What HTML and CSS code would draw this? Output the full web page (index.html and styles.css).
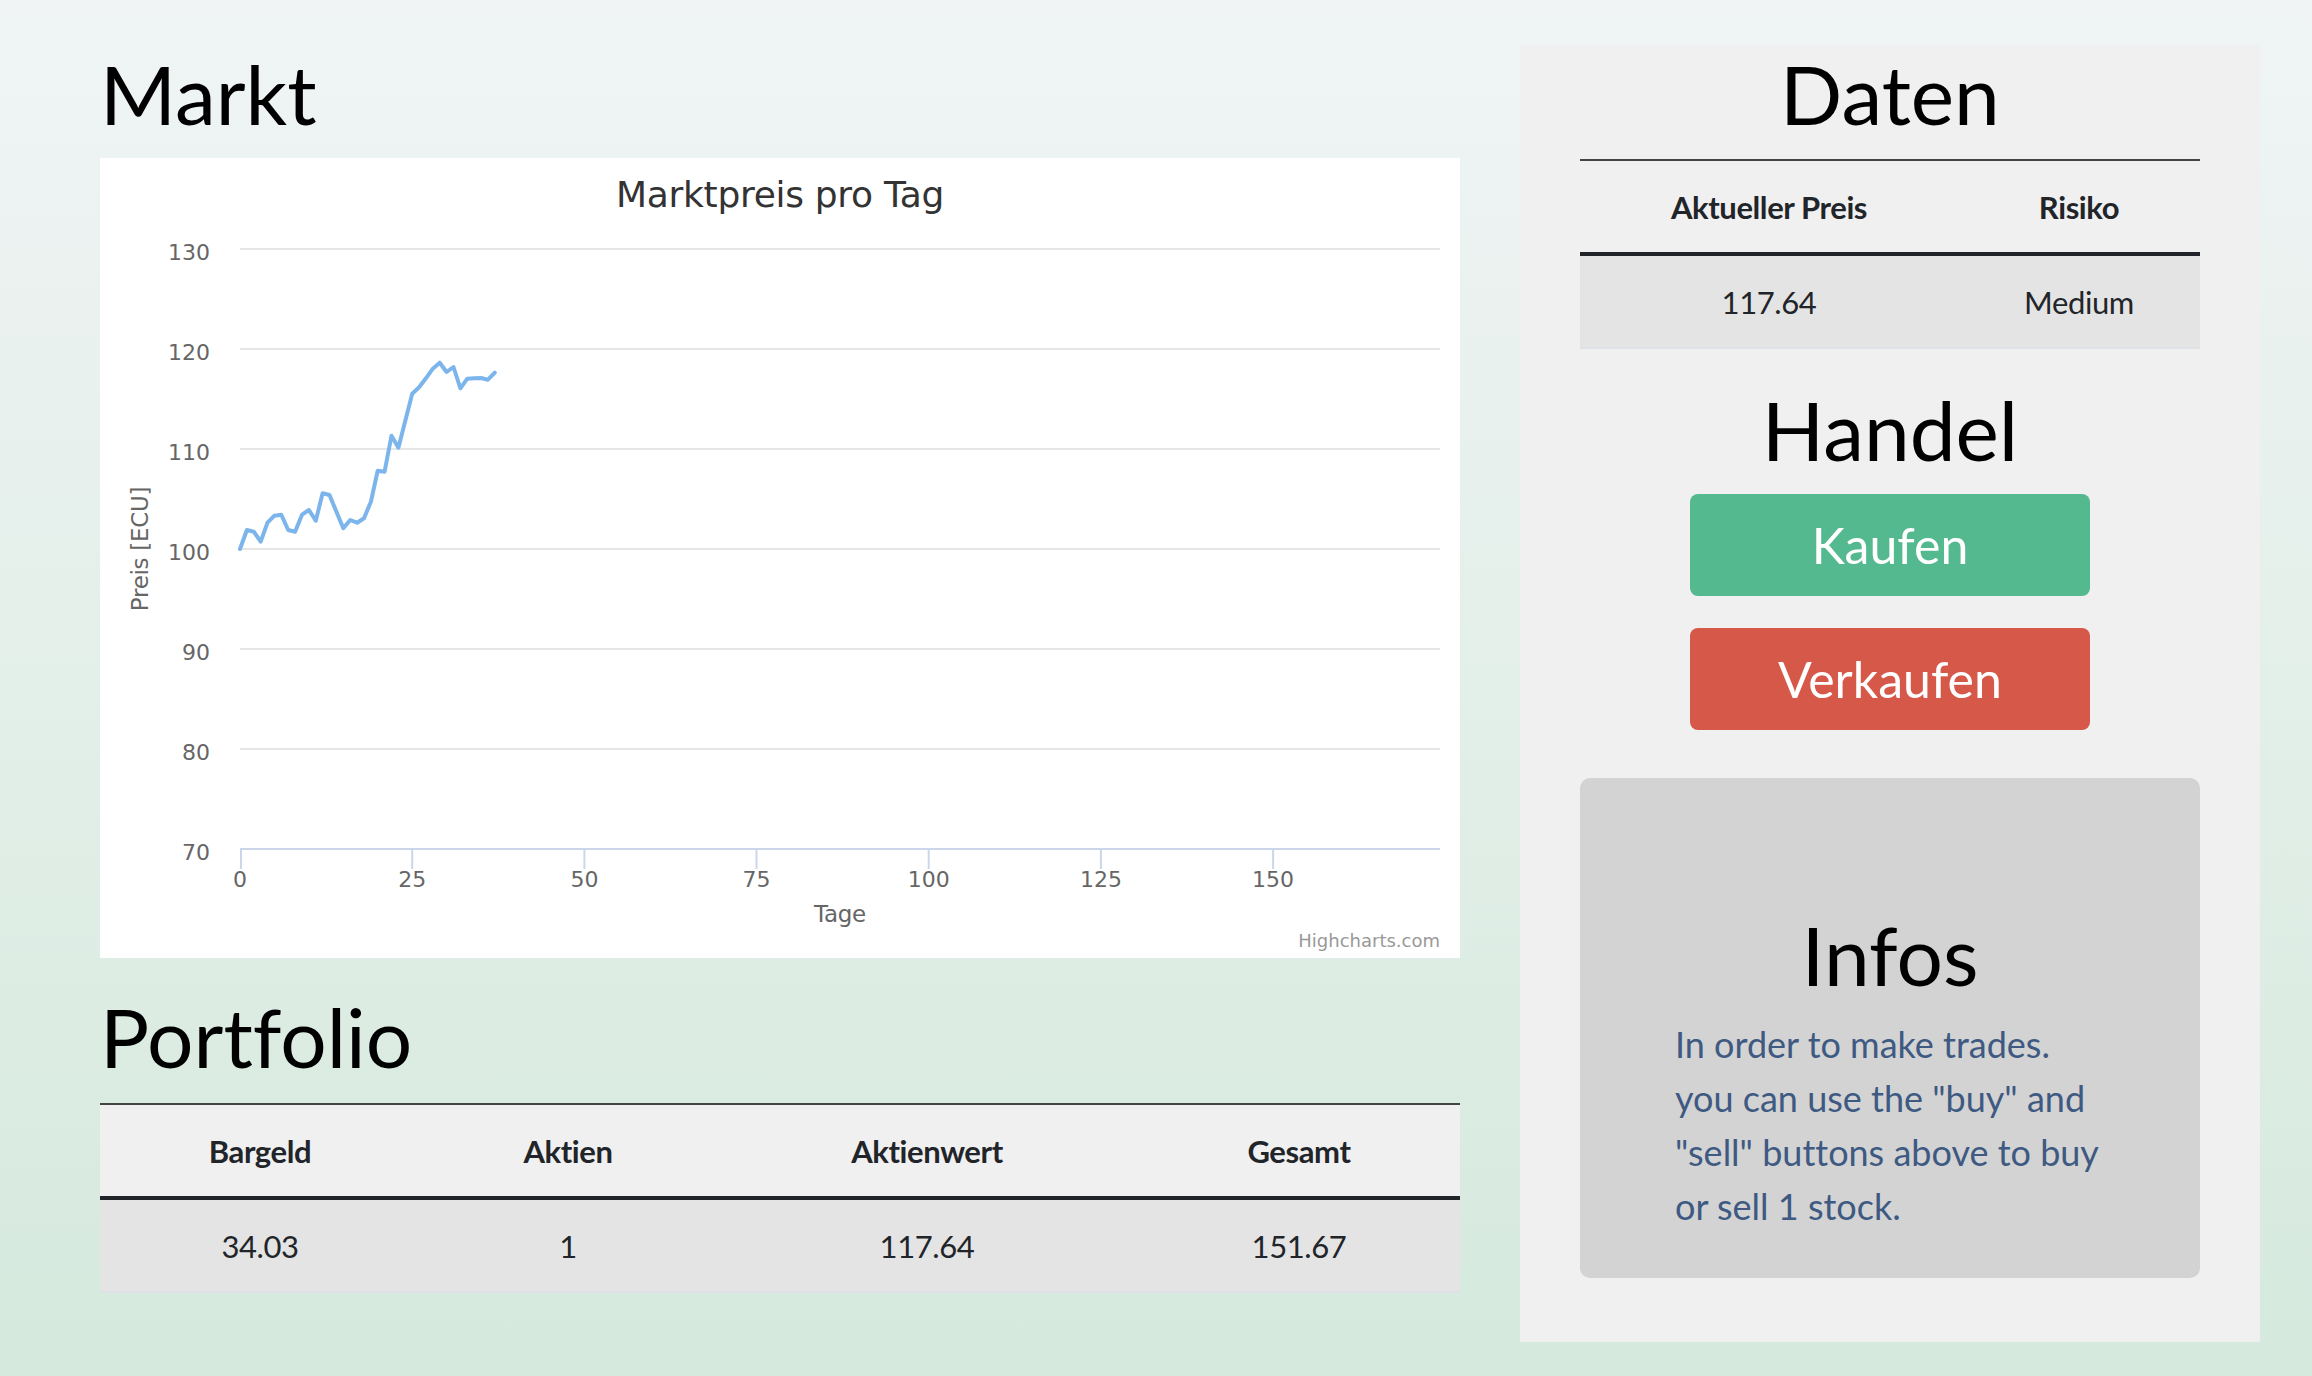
FILE: index.html
```html
<!DOCTYPE html>
<html lang="de">
<head>
<meta charset="utf-8">
<title>Markt</title>
<link rel="stylesheet" href="styles.css">
</head>
<body>
<div class="page">
  <main class="left">
    <h1 class="heading markt">Markt</h1>
    <div class="chart">
      <svg class="chart-svg" width="1360" height="800" viewBox="0 0 1360 800" xmlns="http://www.w3.org/2000/svg">
        <rect x="0" y="0" width="1360" height="800" fill="#ffffff"/>
        <g stroke="#e6e6e6" stroke-width="2">
          <line x1="140" y1="91" x2="1340" y2="91"/>
          <line x1="140" y1="191" x2="1340" y2="191"/>
          <line x1="140" y1="291" x2="1340" y2="291"/>
          <line x1="140" y1="391" x2="1340" y2="391"/>
          <line x1="140" y1="491" x2="1340" y2="491"/>
          <line x1="140" y1="591" x2="1340" y2="591"/>
        </g>
        <g stroke="#ccd6eb" stroke-width="2">
          <line x1="140" y1="691" x2="1340" y2="691"/>
          <line x1="141" y1="691" x2="141" y2="711"/>
          <line x1="312.2" y1="691" x2="312.2" y2="711"/>
          <line x1="484.4" y1="691" x2="484.4" y2="711"/>
          <line x1="656.5" y1="691" x2="656.5" y2="711"/>
          <line x1="828.7" y1="691" x2="828.7" y2="711"/>
          <line x1="1000.9" y1="691" x2="1000.9" y2="711"/>
          <line x1="1173.1" y1="691" x2="1173.1" y2="711"/>
        </g>
        <text class="c-title" x="680" y="49" text-anchor="middle">Marktpreis pro Tag</text>
        <g class="c-label" text-anchor="end">
          <text x="110" y="102">130</text>
          <text x="110" y="202">120</text>
          <text x="110" y="302">110</text>
          <text x="110" y="402">100</text>
          <text x="110" y="502">90</text>
          <text x="110" y="602">80</text>
          <text x="110" y="702">70</text>
        </g>
        <g class="c-label" text-anchor="middle">
          <text x="140" y="729">0</text>
          <text x="312.2" y="729">25</text>
          <text x="484.4" y="729">50</text>
          <text x="656.5" y="729">75</text>
          <text x="828.7" y="729">100</text>
          <text x="1000.9" y="729">125</text>
          <text x="1173.1" y="729">150</text>
        </g>
        <text class="c-axis" x="740" y="764" text-anchor="middle">Tage</text>
        <text class="c-axis" transform="translate(48,391) rotate(-90)" text-anchor="middle">Preis [ECU]</text>
        <text class="c-credits" x="1340" y="789" text-anchor="end">Highcharts.com</text>
        <polyline fill="none" stroke="#7cb5ec" stroke-width="4" stroke-linejoin="round" stroke-linecap="round"
          points="140,391 146.9,372 153.8,373.7 160.7,383.7 167.5,364.7 174.4,357.7 181.3,356.7 188.2,372 195.1,373.7 202,356.7 208.9,352 215.8,362.7 222.6,335.3 229.5,337 236.4,353.7 243.3,370.3 250.2,362 257.1,364.7 264,360.3 270.9,343.7 277.7,312.7 284.6,313.7 291.5,277.7 298.4,289.7 305.3,262.7 312.2,235.7 319.1,229.3 325.9,220.3 332.8,210.7 339.7,204.7 346.6,214 353.5,209 360.4,230.3 367.3,220.7 374.2,220.3 381,220 387.9,221.7 394.8,214.6"/>
      </svg>
    </div>
    <h1 class="heading portfolio-title">Portfolio</h1>
    <table class="tbl portfolio">
      <thead>
        <tr>
          <th class="pc1">Bargeld</th>
          <th class="pc2">Aktien</th>
          <th class="pc3">Aktienwert</th>
          <th class="pc4">Gesamt</th>
        </tr>
      </thead>
      <tbody>
        <tr>
          <td>34.03</td>
          <td>1</td>
          <td>117.64</td>
          <td>151.67</td>
        </tr>
      </tbody>
    </table>
  </main>
  <aside class="panel">
    <h1 class="heading daten">Daten</h1>
    <table class="tbl daten-table">
      <thead>
        <tr>
          <th class="dc1">Aktueller Preis</th>
          <th class="dc2">Risiko</th>
        </tr>
      </thead>
      <tbody>
        <tr>
          <td>117.64</td>
          <td>Medium</td>
        </tr>
      </tbody>
    </table>
    <h1 class="heading handel">Handel</h1>
    <div class="trade">
      <button class="btn buy" type="button">Kaufen</button>
      <button class="btn sell" type="button">Verkaufen</button>
    </div>
    <section class="infos">
      <h1 class="heading infos-title">Infos</h1>
      <p class="infos-text">In order to make trades. you can use the "buy" and "sell" buttons above to buy or sell 1 stock.</p>
    </section>
  </aside>
</div>
</body>
</html>
```

FILE: styles.css
```css
html, body {
  margin: 0;
  padding: 0;
}

body {
  min-height: 1376px;
  font-family: Lato, "Open Sans", "Liberation Sans", sans-serif;
  font-variant-ligatures: none;
  background: linear-gradient(to bottom, #f0f4f5 0%, #e3efe9 50%, #d5e9dd 100%);
  color: #212529;
}

.page {
  display: flex;
  align-items: flex-start;
  gap: 60px;
  padding: 45px 52px 0 100px;
}

.left {
  width: 1360px;
  flex: none;
}

.heading {
  margin: 0;
  font-size: 82px;
  line-height: 96px;
  font-weight: 400;
  color: #000;
}

.markt {
  margin-bottom: 17px;
}

.chart {
  width: 1360px;
  height: 800px;
  background: #fff;
}

.chart-svg {
  display: block;
}

.c-title {
  font-family: "Lucida Grande", "DejaVu Sans", sans-serif;
  font-size: 36px;
  letter-spacing: -0.3px;
  fill: #333333;
}

.c-label {
  font-family: "Lucida Grande", "DejaVu Sans", sans-serif;
  font-size: 22px;
  fill: #666666;
}

.c-axis {
  font-family: "Lucida Grande", "DejaVu Sans", sans-serif;
  font-size: 23px;
  letter-spacing: -0.3px;
  fill: #666666;
}

.c-credits {
  font-family: "Lucida Grande", "DejaVu Sans", sans-serif;
  font-size: 18px;
  fill: #999999;
}

.portfolio-title {
  margin: 30px 0 19px;
}

.tbl {
  width: 100%;
  border-collapse: collapse;
  border-top: 2px solid #444;
  background: #f0f0f0;
  font-size: 31px;
  letter-spacing: -0.4px;
  line-height: 48px;
  color: #212529;
  text-align: center;
}

.tbl th,
.tbl td {
  padding: 22px 0 21px;
}

.tbl th {
  font-weight: 700;
  border-bottom: 4px solid #212529;
}

.tbl td {
  background: #e4e4e4;
  border-bottom: 2px solid #dee2e6;
}

.pc1 { width: 320px; }
.pc2 { width: 296px; }
.pc3 { width: 422px; }
.pc4 { width: 322px; }

.panel {
  flex: none;
  width: 740px;
  height: 1297px;
  box-sizing: border-box;
  padding: 0 60px;
  background: #f0f0f0;
  display: flex;
  flex-direction: column;
  align-items: center;
}

.daten {
  margin-bottom: 18px;
}

.daten-table {
  width: 620px;
}

.dc1 { width: 378px; }
.dc2 { width: 242px; }

.handel {
  margin: 32px 0 17px;
}

.trade {
  display: flex;
  flex-direction: column;
  gap: 32px;
}

.btn {
  width: 400px;
  height: 102px;
  border: none;
  border-radius: 8px;
  font-family: Lato, "Open Sans", sans-serif;
  font-size: 50px;
  font-weight: 400;
  color: #fff;
  padding: 0;
  cursor: pointer;
}

.buy {
  background: #55b98f;
}

.sell {
  background: #d65848;
}

.infos {
  margin-top: 48px;
  width: 620px;
  height: 500px;
  box-sizing: border-box;
  padding-top: 128px;
  background: #d3d3d3;
  border-radius: 10px;
  text-align: center;
}

.infos-text {
  width: 424px;
  margin: 15px 0 0 95px;
  text-align: left;
  font-size: 36px;
  line-height: 54px;
  color: #3e5a82;
}
```
